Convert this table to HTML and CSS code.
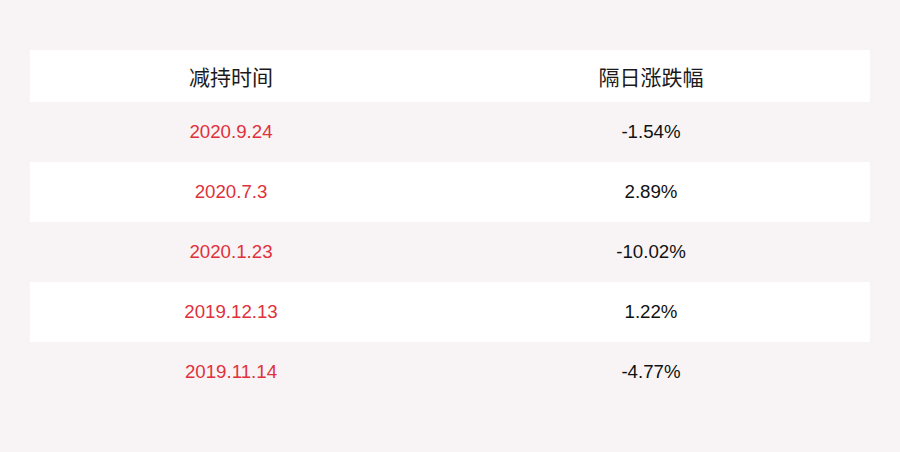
FILE: index.html
```
<!DOCTYPE html>
<html lang="zh">
<head>
<meta charset="utf-8">
<link rel="stylesheet" href="styles.css">
</head>
<body>
<div class="page">
  <div class="table">
    <div class="row head"><div class="cell">减持时间</div><div class="cell">隔日涨跌幅</div></div>
    <div class="row"><div class="cell date">2020.9.24</div><div class="cell val">-1.54%</div></div>
    <div class="row alt"><div class="cell date">2020.7.3</div><div class="cell val">2.89%</div></div>
    <div class="row"><div class="cell date">2020.1.23</div><div class="cell val">-10.02%</div></div>
    <div class="row alt"><div class="cell date">2019.12.13</div><div class="cell val">1.22%</div></div>
    <div class="row"><div class="cell date">2019.11.14</div><div class="cell val">-4.77%</div></div>
  </div>
</div>
</body>
</html>
```
FILE: styles.css
```
html, body { margin: 0; padding: 0; }
body { background: #f8f4f5; width: 900px; height: 452px; overflow: hidden; }
.page { padding: 50px 30px 0 30px; }
.table { display: flex; flex-direction: column; }
.row { display: grid; grid-template-columns: 1fr 1fr; height: 60px; align-items: center; }
.row.head { height: 52px; background: #fff; }
.row.alt { background: #fff; }
.cell { text-align: center; padding-right: 18px; font-family: "Liberation Sans", Arial, sans-serif; font-size: 18.7px; }
.head .cell { font-family: "Noto Sans CJK SC", sans-serif; font-size: 21px; color: #1a1a1a; font-weight: 400; }
.date { color: #e0313b; }
.val { color: #111; }
```
